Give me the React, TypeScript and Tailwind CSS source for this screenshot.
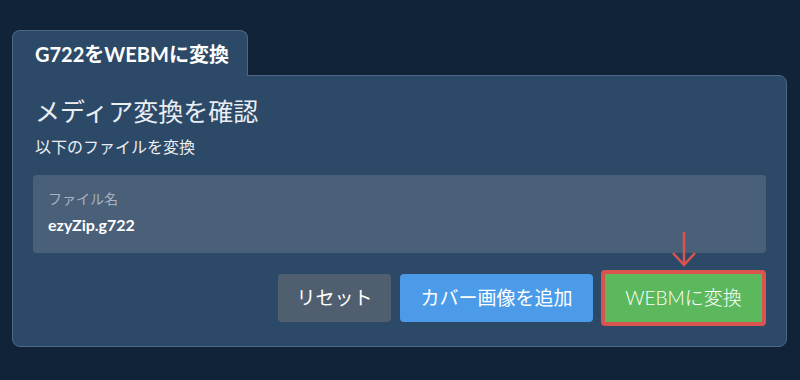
import React from 'react';

const font = { fontFamily: 'Lato, "Noto Sans CJK JP", sans-serif' };

function ArrowDown() {
    return (
        <svg width="26" height="36" viewBox="0 0 26 36" className="absolute left-1/2 -translate-x-1/2 -top-[39px]">
            <path d="M13 1 V34 M2 22 L13 34 L24 22" fill="none" stroke="#d9534f" strokeWidth="2.5" />
        </svg>
    );
}

export default function App() {
    return (
        <div className="w-[800px] h-[380px] bg-[#112338] pt-[30px] pl-[12px] pr-[13px]" style={font}>
            {/* Tab */}
            <div className="relative z-10 -mb-px w-[236px] h-[46px] bg-[#2d4968] border-t border-x border-[#4d6787] rounded-t-lg flex items-center pl-[22px]">
                <span className="text-white font-bold text-[20px]">G722をWEBMに変換</span>
            </div>

            {/* Panel */}
            <div className="bg-[#2d4968] border border-[#4d6787] rounded-b-lg rounded-tr-lg px-[20px] pt-[19px] pb-[20px]">
                <h2 className="text-[#e9eef3] text-[25px] leading-[32px] pl-[2px]">メディア変換を確認</h2>
                <p className="text-[#e9eef3] text-[16px] leading-[22px] mt-[9px] pl-[2px]">以下のファイルを変換</p>

                <div className="mt-[17px] h-[78px] bg-[#4a6079] rounded-[4px] px-[15px] pt-[14px]">
                    <div className="text-[#a7b3c1] text-[14px] leading-[20px]">ファイル名</div>
                    <div className="text-white font-bold text-[16px] leading-[22px] mt-[5px]">ezyZip.g722</div>
                </div>

                <div className="flex justify-end items-center mt-[17px]">
                    <button className="h-[48px] w-[113px] bg-[#4f5f70] text-white text-[19px] rounded-[4px]">リセット</button>
                    <button className="h-[48px] w-[193px] ml-[9px] bg-[#4b9be8] text-white text-[19px] rounded-[4px]">カバー画像を追加</button>
                    <div className="relative ml-[8px]">
                        <ArrowDown />
                        <button className="h-[56px] w-[165px] bg-[#5cb85c] text-white text-[19px] font-light rounded-[4px] border-4 border-[#d9534f]">
                            WEBMに変換
                        </button>
                    </div>
                </div>
            </div>
        </div>
    );
}
